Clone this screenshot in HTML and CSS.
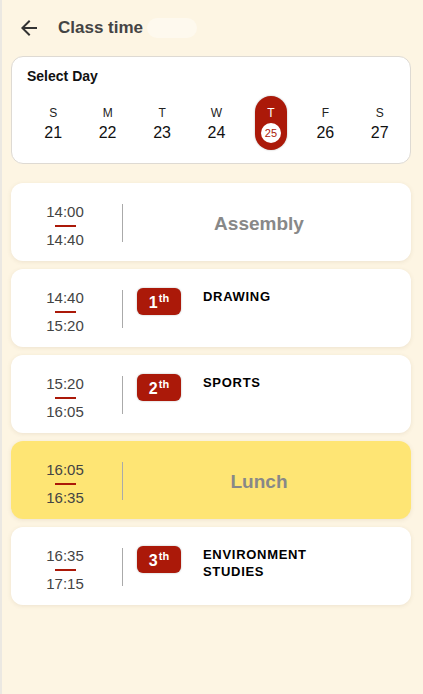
FILE: index.html
```html
<!DOCTYPE html>
<html>
<head>
<meta charset="utf-8">
<link rel="stylesheet" href="styles.css">
</head>
<body>
<div class="page">
  <header class="header">
    <svg class="back" width="24" height="24" viewBox="0 0 24 24"><path d="M20 11H7.83l5.59-5.59L12 4l-8 8 8 8 1.41-1.41L7.83 13H20v-2z" fill="#333"/></svg>
    <h1 class="title">Class time</h1>
    <span class="ghost"></span>
  </header>

  <section class="day-card">
    <div class="day-title">Select Day</div>
    <div class="days">
      <div class="day"><span class="dl">S</span><span class="dn">21</span></div>
      <div class="day"><span class="dl">M</span><span class="dn">22</span></div>
      <div class="day"><span class="dl">T</span><span class="dn">23</span></div>
      <div class="day"><span class="dl">W</span><span class="dn">24</span></div>
      <div class="day active"><span class="dl">T</span><span class="dn">25</span></div>
      <div class="day"><span class="dl">F</span><span class="dn">26</span></div>
      <div class="day"><span class="dl">S</span><span class="dn">27</span></div>
    </div>
  </section>

  <div class="list">
    <div class="slot">
      <div class="times"><span class="t">14:00</span><span class="bar"></span><span class="t">14:40</span></div>
      <div class="divider"></div>
      <div class="content center"><span class="big">Assembly</span></div>
    </div>
    <div class="slot">
      <div class="times"><span class="t">14:40</span><span class="bar"></span><span class="t">15:20</span></div>
      <div class="divider"></div>
      <div class="content"><span class="badge">1<sup>th</sup></span><span class="subject">DRAWING</span></div>
    </div>
    <div class="slot">
      <div class="times"><span class="t">15:20</span><span class="bar"></span><span class="t">16:05</span></div>
      <div class="divider"></div>
      <div class="content"><span class="badge">2<sup>th</sup></span><span class="subject">SPORTS</span></div>
    </div>
    <div class="slot lunch">
      <div class="times"><span class="t">16:05</span><span class="bar"></span><span class="t">16:35</span></div>
      <div class="divider"></div>
      <div class="content center"><span class="big">Lunch</span></div>
    </div>
    <div class="slot">
      <div class="times"><span class="t">16:35</span><span class="bar"></span><span class="t">17:15</span></div>
      <div class="divider"></div>
      <div class="content"><span class="badge">3<sup>th</sup></span><span class="subject">ENVIRONMENT STUDIES</span></div>
    </div>
  </div>
</div>
</body>
</html>
```

FILE: styles.css
```css
* { box-sizing: border-box; }
html, body { margin: 0; padding: 0; }
body {
  background: #fdf5e3;
  font-family: "Liberation Sans", Arial, sans-serif;
  width: 423px;
  height: 694px;
  overflow: hidden;
}
.page {
  border-left: 2px solid #ebe8e2;
  min-height: 694px;
  padding: 0 12px 0 9px;
}
.header {
  display: flex;
  align-items: center;
  height: 56px;
  padding-left: 6px;
}
.back { display: block; flex: none; }
.title {
  margin: 0 0 0 17px;
  font-size: 17px;
  font-weight: bold;
  color: #444;
  line-height: 20px;
}
.ghost {
  width: 50px;
  height: 20px;
  margin-left: 4px;
  border-radius: 10px;
  background: #fef9ee;
}
.day-card {
  background: #fff;
  border: 1px solid #dedad3;
  border-radius: 12px;
  height: 108px;
  padding: 11px 3px 13px 14px;
}
.day-title {
  font-size: 14px;
  font-weight: bold;
  color: #111;
  line-height: 17px;
  padding-left: 1px;
}
.days {
  display: grid;
  grid-template-columns: repeat(7, 1fr);
  margin-top: 11px;
}
.day {
  justify-self: center;
  width: 32px;
  height: 54px;
  border-radius: 16px;
  display: flex;
  flex-direction: column;
  align-items: center;
  padding-top: 8px;
}
.dl { font-size: 12px; line-height: 18px; color: #222; }
.dn {
  font-size: 16px;
  line-height: 20px;
  margin-top: 1px;
  color: #111;
}
.day.active { background: #ab1909; box-shadow: 0 0 2px rgba(0,0,0,0.3); }
.day.active .dl { color: #fff; }
.day.active .dn {
  width: 20px;
  height: 20px;
  border-radius: 50%;
  background: #fff;
  color: #ab1909;
  font-size: 11px;
  text-align: center;
}
.list {
  margin-top: 19px;
  display: flex;
  flex-direction: column;
  gap: 8px;
}
.slot {
  display: flex;
  height: 78px;
  background: #fff;
  border-radius: 12px;
  box-shadow: 0 1px 4px rgba(120, 100, 60, 0.12);
}
.slot.lunch { background: #fee574; }
.times {
  width: 108px;
  flex: none;
  display: flex;
  flex-direction: column;
  align-items: center;
  padding-top: 20px;
}
.t { font-size: 15px; line-height: 18px; color: #444; }
.bar {
  width: 21px;
  height: 2px;
  background: #ab1909;
  margin: 4px 0;
}
.divider {
  flex: none;
  width: 1px;
  height: 38px;
  margin: 21px 0 0 3px;
  background: #aaa;
}
.content {
  flex: 1;
  display: flex;
  align-items: flex-start;
  padding: 19px 16px 0 14px;
}
.content.center {
  justify-content: center;
  padding: 30px 16px 0 0;
}
.big {
  font-size: 19px;
  font-weight: bold;
  color: #888;
  line-height: 22px;
}
.badge {
  flex: none;
  width: 44px;
  height: 27px;
  border-radius: 6px;
  background: #ab1909;
  color: #fff;
  font-size: 16px;
  font-weight: bold;
  display: flex;
  align-items: center;
  justify-content: center;
  padding-top: 2px;
  box-shadow: 0 0 2px rgba(0,0,0,0.3);
}
.badge sup {
  font-size: 11px;
  line-height: 0;
  position: relative;
  top: -5px;
  vertical-align: baseline;
  margin-left: 1px;
}
.subject {
  margin-left: 22px;
  font-size: 13px;
  font-weight: bold;
  color: #000;
  letter-spacing: 0.7px;
  line-height: 17px;
  max-width: 120px;
}
```
